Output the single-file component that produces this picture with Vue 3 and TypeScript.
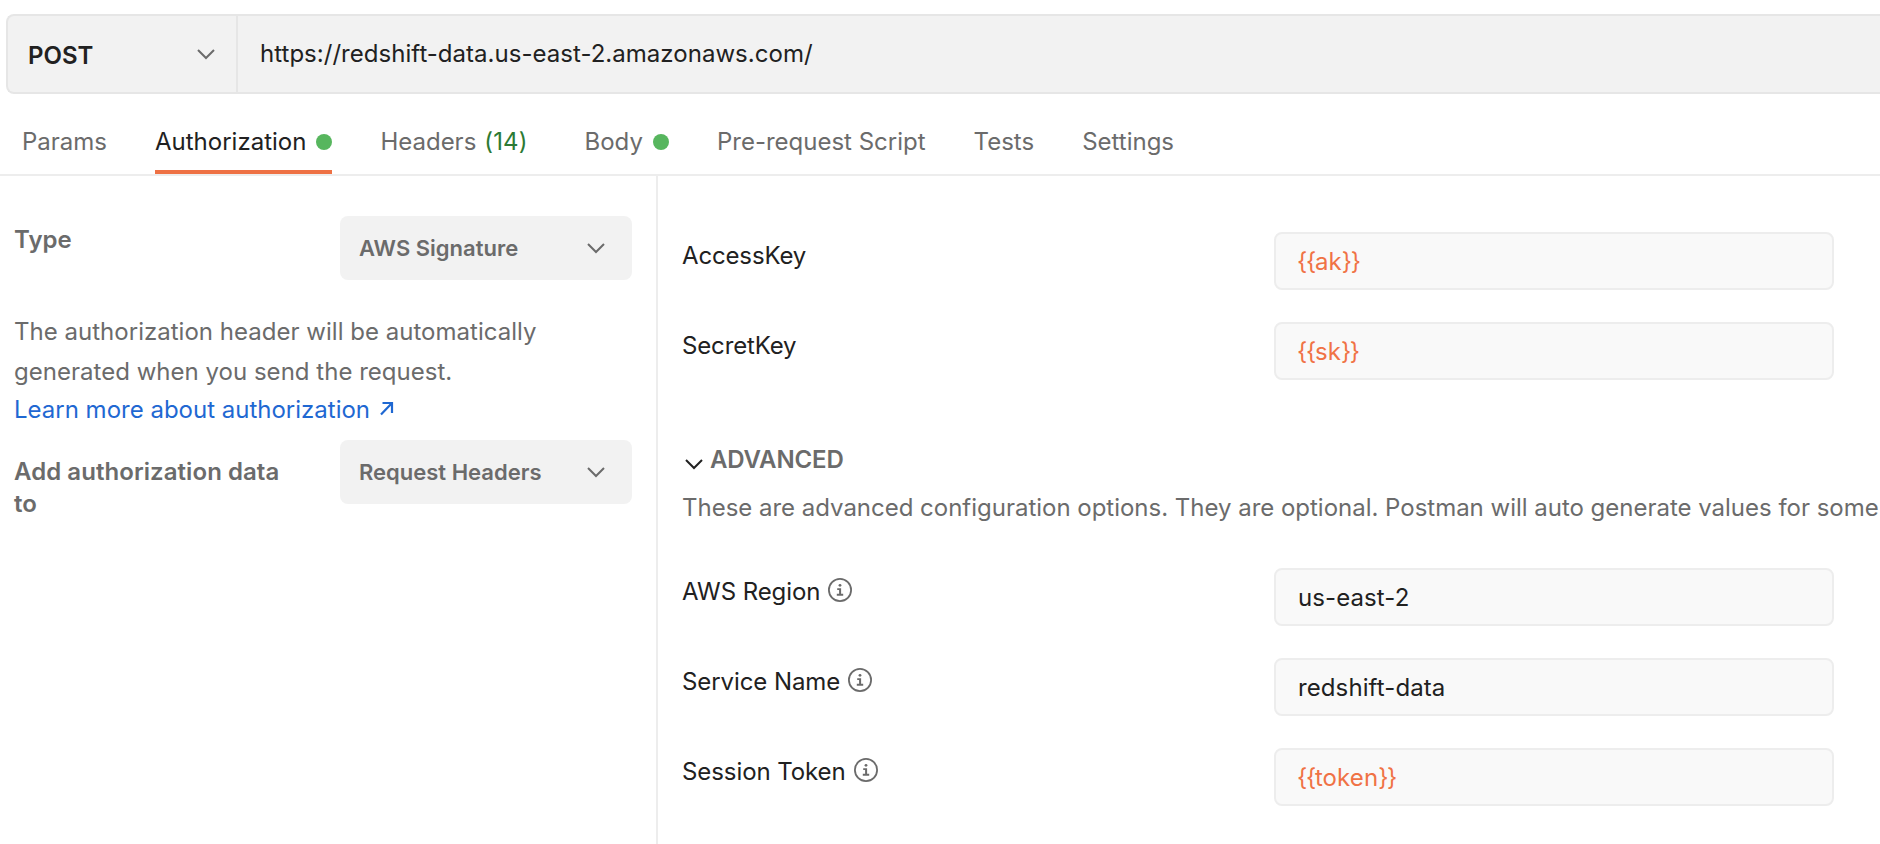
<script setup lang="ts">
interface Tab {
  label: string
  count?: number
  dot?: boolean
  active?: boolean
}

interface Field {
  label: string
  value: string
  variable?: boolean
  info?: boolean
}

const tabs: Tab[] = [
  { label: 'Params' },
  { label: 'Authorization', dot: true, active: true },
  { label: 'Headers', count: 14 },
  { label: 'Body', dot: true },
  { label: 'Pre-request Script' },
  { label: 'Tests' },
  { label: 'Settings' },
]

const keyFields: Field[] = [
  { label: 'AccessKey', value: 'ak', variable: true },
  { label: 'SecretKey', value: 'sk', variable: true },
]

const advancedFields: Field[] = [
  { label: 'AWS Region', value: 'us-east-2', info: true },
  { label: 'Service Name', value: 'redshift-data', info: true },
  { label: 'Session Token', value: 'token', variable: true, info: true },
]

const groups = [keyFields, advancedFields]
const open = '{{'
const close = '}}'
</script>

<template>
  <div class="page">
    <div class="url-bar">
      <div class="method">
        <span class="method-name">POST</span>
        <svg class="chevron" width="20" height="12" viewBox="0 0 20 12"><path d="M2 2l8 8 8-8" /></svg>
      </div>
      <div class="url">https://redshift-data.us-east-2.amazonaws.com/</div>
    </div>

    <nav class="tabs">
      <div v-for="tab in tabs" :key="tab.label" class="tab" :class="{ active: tab.active }">
        <span>{{ tab.label }}</span>
        <span v-if="tab.count" class="count">({{ tab.count }})</span>
        <i v-if="tab.dot" class="dot"></i>
      </div>
    </nav>

    <main class="body">
      <aside class="side">
        <div class="side-row">
          <div class="side-label">Type</div>
          <div class="select">
            <span>AWS Signature</span>
            <svg class="chevron" width="20" height="12" viewBox="0 0 20 12"><path d="M2 2l8 8 8-8" /></svg>
          </div>
        </div>
        <p class="note">The authorization header will be automatically generated when you send the request.</p>
        <a class="link">
          <span>Learn more about authorization</span>
          <svg width="16" height="16" viewBox="0 0 16 16"><path d="M3.5 2H13v10M13 2L2 13.5" /></svg>
        </a>
        <div class="side-row">
          <div class="side-label">Add authorization data to</div>
          <div class="select">
            <span>Request Headers</span>
            <svg class="chevron" width="20" height="12" viewBox="0 0 20 12"><path d="M2 2l8 8 8-8" /></svg>
          </div>
        </div>
      </aside>

      <section class="config">
        <template v-for="(group, index) in groups" :key="index">
          <template v-if="index === 1">
            <div class="advanced">
              <svg class="chevron dark" width="20" height="12" viewBox="0 0 20 12"><path d="M2 2l8 8 8-8" /></svg>
              <span>ADVANCED</span>
            </div>
            <p class="hint">These are advanced configuration options. They are optional. Postman will auto generate values for some</p>
          </template>
          <div class="fields">
            <div v-for="field in group" :key="field.label" class="field">
              <div class="field-label">
                <span :class="{ key: !field.info }">{{ field.label }}</span>
                <svg v-if="field.info" class="info" width="24" height="24" viewBox="0 0 24 24">
                  <circle class="ring" cx="12" cy="12" r="11.1" />
                  <circle cx="12" cy="7.3" r="1.4" />
                  <path d="M9.2 10.2h3.9v5.6h2.1v1.9H8.8v-1.9h2.3v-3.8H9.2z" />
                </svg>
              </div>
              <div class="input" :class="{ variable: field.variable }">
                <span v-if="field.variable" class="brace">{{ open }}</span><span>{{ field.value }}</span><span v-if="field.variable" class="brace">{{ close }}</span>
              </div>
            </div>
          </div>
        </template>
      </section>
    </main>
  </div>
</template>

<style>
body {
  margin: 0;
  background: #fff;
}
</style>

<style scoped>
.page {
  box-sizing: border-box;
  width: 100%;
  height: 844px;
  padding-top: 14px;
  overflow: hidden;
  display: flex;
  flex-direction: column;
  background: #fff;
  color: #212121;
  font-family: Inter, "Liberation Sans", sans-serif;
  font-size: 24px;
  line-height: 32px;
  white-space: nowrap;
}

p {
  margin: 0;
}

.url-bar {
  box-sizing: border-box;
  height: 80px;
  margin-left: 6px;
  display: flex;
  flex: none;
  border: 2px solid #e6e6e6;
  border-right: 0;
  border-radius: 8px 0 0 8px;
  background: #f2f2f2;
}

.method {
  box-sizing: border-box;
  width: 230px;
  padding: 0 20px 0 20px;
  display: flex;
  align-items: center;
  justify-content: space-between;
  border-right: 2px solid #e6e6e6;
}

.method-name {
  padding-top: 4px;
  font-weight: 600;
}

.chevron {
  flex: none;
  fill: none;
  stroke: #6b6b6b;
  stroke-width: 2;
}

.chevron.dark {
  stroke: #212121;
}

.url {
  padding: 22px 0 0 22px;
  letter-spacing: 0.03px;
}

.tabs {
  box-sizing: border-box;
  height: 82px;
  padding-left: 22px;
  display: flex;
  flex: none;
  gap: 48px;
  border-bottom: 2px solid #ededed;
  color: #6b6b6b;
}

.tab {
  box-sizing: border-box;
  height: 80px;
  padding-top: 20px;
  display: flex;
  align-items: center;
  border-bottom: 4px solid transparent;
}

.tab.active {
  color: #212121;
  border-bottom-color: #ee7144;
}

.count {
  margin: 0 9px 0 8px;
  color: #2c7a34;
  letter-spacing: 0.1px;
}

.dot {
  width: 16px;
  height: 16px;
  margin-left: 10px;
  border-radius: 50%;
  background: #57b65e;
}

.body {
  flex: 1;
  display: flex;
  min-height: 0;
}

.side {
  box-sizing: border-box;
  width: 658px;
  padding: 40px 24px 0 14px;
  flex: none;
  border-right: 2px solid #ededed;
  color: #6b6b6b;
}

.side-row {
  display: flex;
  justify-content: space-between;
}

.side-label {
  width: 276px;
  padding-top: 16px;
  font-weight: 600;
  letter-spacing: 0.06px;
  white-space: normal;
}

.side-row:first-child .side-label {
  padding-top: 8px;
}

.select {
  box-sizing: border-box;
  width: 292px;
  height: 64px;
  padding: 0 26px 0 19px;
  display: flex;
  align-items: center;
  justify-content: space-between;
  border-radius: 8px;
  background: #f2f2f2;
  font-size: 22px;
  font-weight: 600;
}

.note {
  width: 560px;
  margin-top: 32px;
  line-height: 40px;
  letter-spacing: 0.02px;
  white-space: normal;
}

.link {
  height: 32px;
  margin: 2px 0 14px;
  display: flex;
  gap: 9px;
  color: #1f68d2;
}

.link svg {
  margin-top: 7px;
  fill: none;
  stroke: currentColor;
  stroke-width: 2.2;
}

.config {
  flex: 1;
  min-width: 0;
  padding: 56px 0 0 24px;
  overflow: hidden;
}

.fields {
  display: flex;
  flex-direction: column;
  gap: 32px;
}

.field {
  height: 58px;
  display: flex;
}

.field-label {
  width: 592px;
  padding-top: 8px;
  flex: none;
  display: flex;
  letter-spacing: -0.08px;
}

.key {
  letter-spacing: -0.15px;
}

.info {
  margin: 2px 0 0 8px;
  fill: #6b6b6b;
}

.ring {
  fill: none;
  stroke: #6b6b6b;
  stroke-width: 1.8;
}

.input {
  box-sizing: border-box;
  width: 560px;
  padding: 12px 0 0 22px;
  border: 2px solid #ededed;
  border-radius: 8px;
  background: #f9f9f9;
  letter-spacing: 0.1px;
}

.input.variable {
  padding-left: 21px;
  color: #f07245;
}

.brace {
  letter-spacing: -1.3px;
}

.advanced {
  margin-top: 64px;
  display: flex;
  align-items: center;
  gap: 6px;
  padding-left: 2px;
  color: #6b6b6b;
  font-weight: 600;
  letter-spacing: -0.15px;
}

.advanced .chevron {
  margin-top: 7px;
}

.hint {
  margin: 16px 0 44px;
  color: #6b6b6b;
  letter-spacing: -0.015px;
}
</style>
